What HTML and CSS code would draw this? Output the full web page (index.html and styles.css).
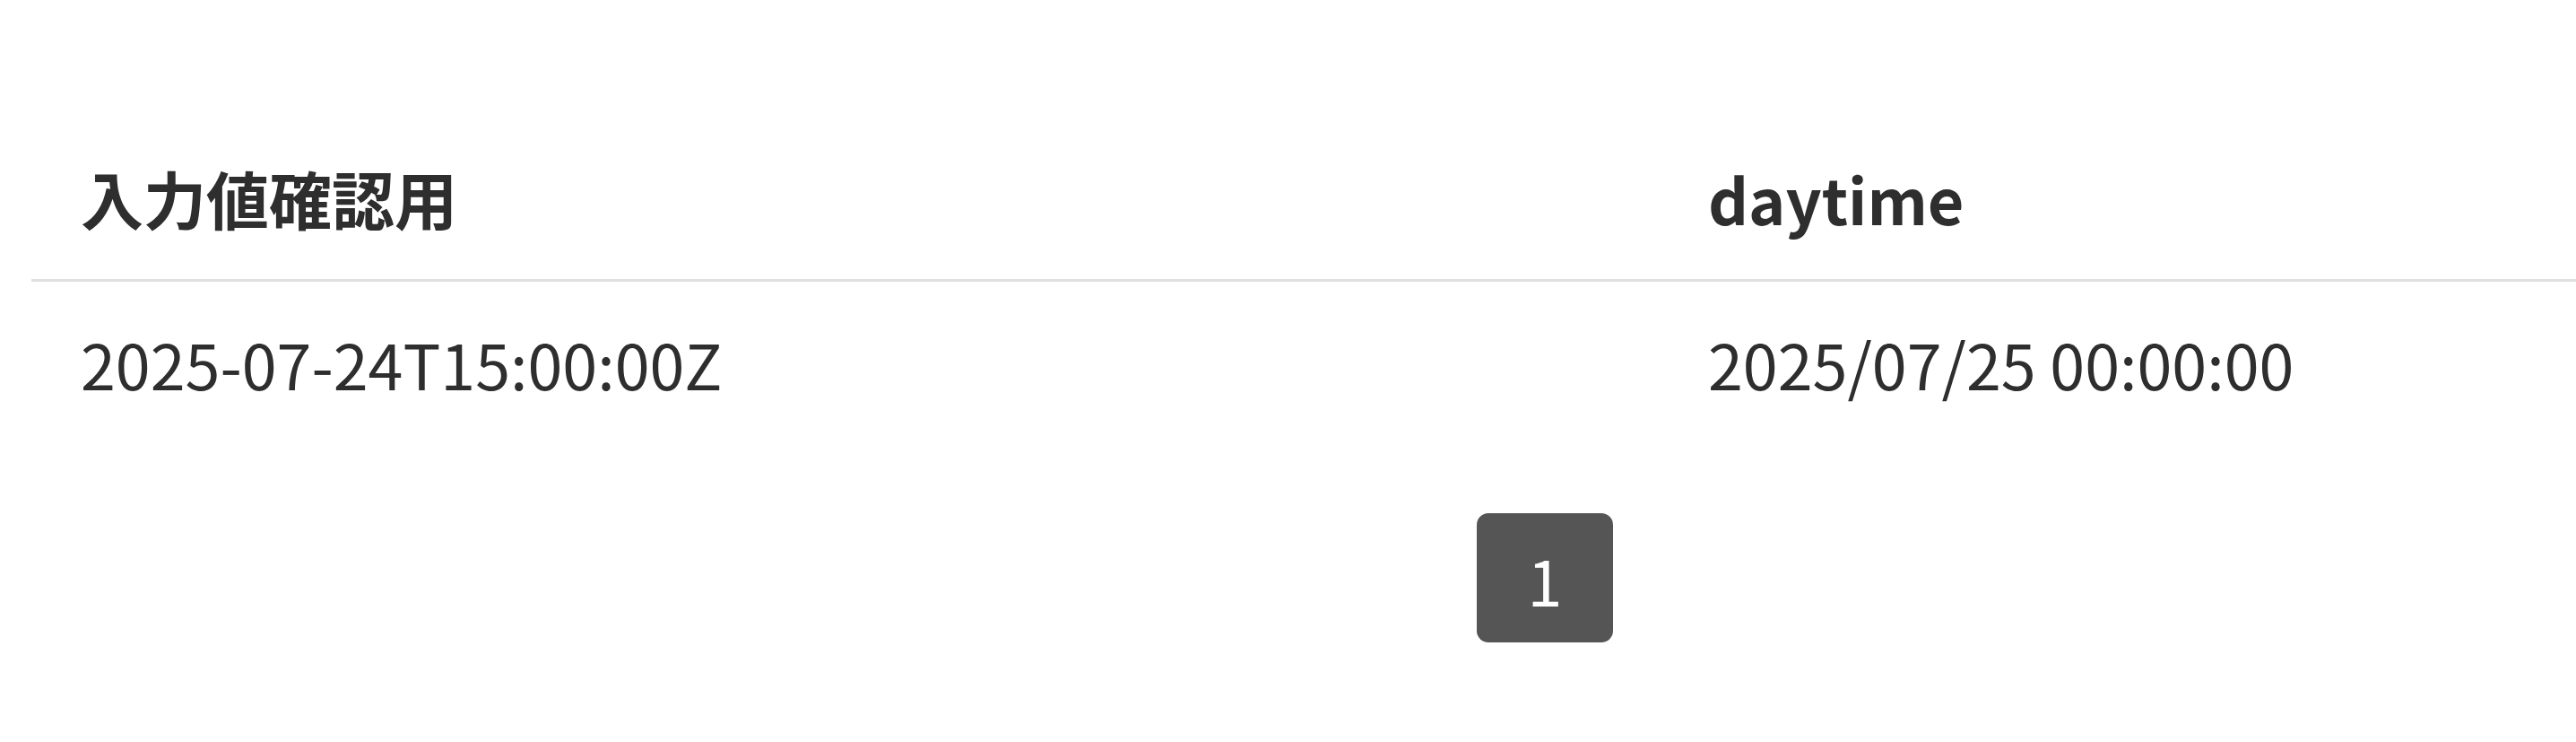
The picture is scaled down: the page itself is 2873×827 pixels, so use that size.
FILE: index.html
```html
<!DOCTYPE html>
<html lang="ja">
<head>
<meta charset="utf-8">
<title>入力値確認用</title>
<link rel="stylesheet" href="styles.css">
</head>
<body>
<div class="page">
  <table class="data-table">
    <thead>
      <tr>
        <th class="col-first">入力値確認用</th>
        <th>daytime</th>
      </tr>
    </thead>
    <tbody>
      <tr>
        <td class="col-first">2025-07-24T15:00:00Z</td>
        <td>2025/07/25 00:00:00</td>
      </tr>
    </tbody>
  </table>
  <nav class="pagination">
    <span class="page-btn">1</span>
  </nav>
</div>
</body>
</html>
```

FILE: styles.css
```css
html, body {
  margin: 0;
  padding: 0;
  background: #ffffff;
}

body {
  font-family: "Noto Sans CJK JP", "Noto Sans", sans-serif;
  font-size: 70px;
  color: #2e2e2e;
}

.page {
  padding: 130px 0 0 35px;
}

.data-table {
  width: 100%;
  border-collapse: collapse;
  table-layout: fixed;
}

.data-table th,
.data-table td {
  text-align: left;
  padding: 40px 55px 40px 55px;
  line-height: normal;
  white-space: nowrap;
}

.data-table th {
  font-weight: 700;
  border-bottom: 3px solid #e0e0e0;
}

.data-table td {
  font-weight: 400;
}

.col-first {
  width: 1705px;
}

.pagination {
  display: flex;
  padding-left: 1612px;
  margin-top: 77px;
}

.page-btn {
  display: flex;
  align-items: center;
  justify-content: center;
  width: 152px;
  height: 144px;
  box-sizing: border-box;
  padding-top: 4px;
  background: #555555;
  color: #ffffff;
  border-radius: 13px;
  line-height: 1;
}
```
